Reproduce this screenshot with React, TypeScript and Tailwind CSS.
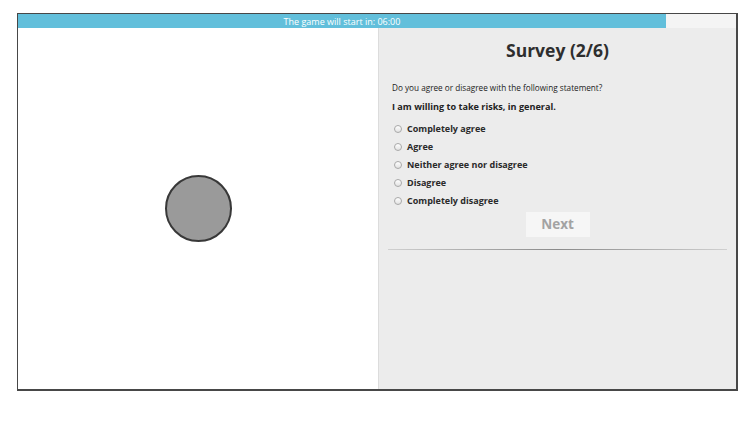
const options = ["Completely agree", "Agree", "Neither agree nor disagree", "Disagree", "Completely disagree"];

export default function App() {
  return (
    <div className="w-[755px] h-[430px] bg-white font-['Open_Sans',sans-serif] pt-[13px] pl-[17px]">
      <div className="w-[721px] h-[378px] border-l border-t border-r-2 border-b-2 border-[#474747] flex flex-col">
        <div className="h-[14px] bg-[#f4f4f4] flex">
          <div className="w-[648px] h-full bg-[#62bfdb] flex items-center justify-center">
            <span className="text-[9px] leading-none text-white">The game will start in: 06:00</span>
          </div>
        </div>
        <div className="flex flex-1">
          <div className="w-[361px] border-r border-[#dcdcdc] bg-white flex items-center justify-center">
            <div className="w-[67px] h-[67px] rounded-full bg-[#9a9a9a] border-2 border-[#383838]" />
          </div>
          <div className="flex-1 bg-[#ececec] flex flex-col px-[9px]">
            <h1 className="mt-[10px] text-center text-[17.5px] font-bold text-[#2e2e2e] leading-[24px]">Survey (2/6)</h1>
            <p className="mt-[20px] ml-[4px] text-[8.2px] text-[#222] leading-[12px]">Do you agree or disagree with the following statement?</p>
            <p className="mt-[7px] ml-[4px] text-[9.1px] font-bold text-[#222] leading-[12px]">I am willing to take risks, in general.</p>
            <div className="mt-[7px] ml-[6px] flex flex-col">
              {options.map((o) => (
                <label key={o} className="flex items-center h-[18px] gap-[5px]">
                  <span className="w-[8px] h-[8px] rounded-full border border-[#a9a9a9] bg-gradient-to-b from-white to-[#e2e2e2]" />
                  <span className="text-[9px] font-bold text-[#2a2a2a]">{o}</span>
                </label>
              ))}
            </div>
            <div className="flex justify-center mt-[2px]">
              <button className="w-[64px] h-[25px] bg-[#f6f6f6] text-[13.5px] font-bold text-[#a3a3a3]">Next</button>
            </div>
            <div className="mt-[12px] h-px bg-gradient-to-r from-[#d0d0d0] via-[#8a8a8a] to-[#d0d0d0]" />
          </div>
        </div>
      </div>
    </div>
  );
}
